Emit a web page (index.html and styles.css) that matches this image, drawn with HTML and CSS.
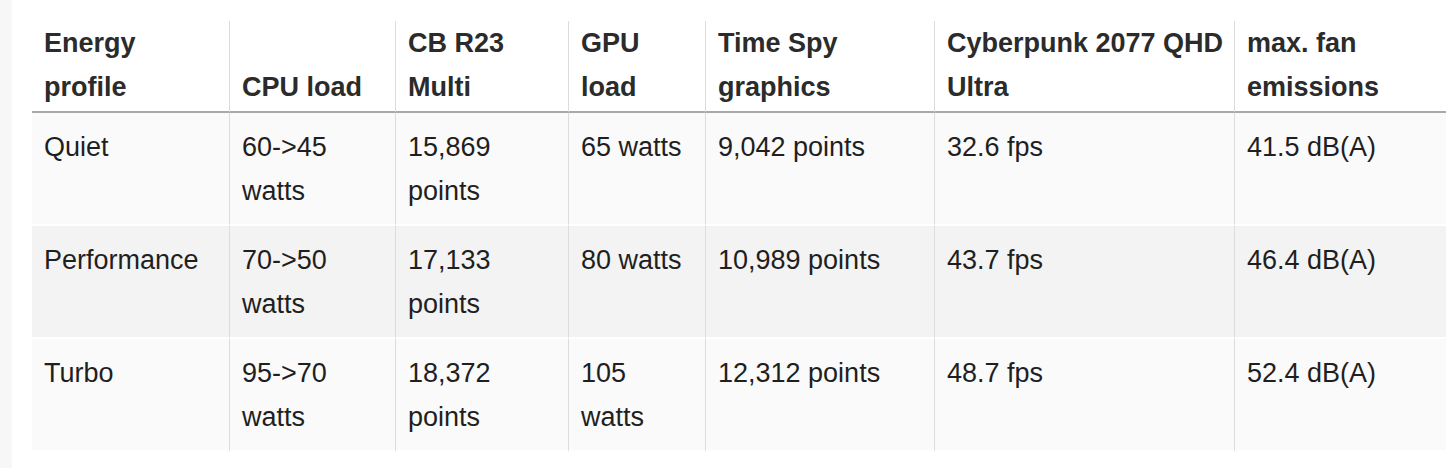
FILE: index.html
```html
<!DOCTYPE html>
<html lang="en">
<head>
<meta charset="utf-8">
<title>Energy profiles</title>
<link rel="stylesheet" href="styles.css">
</head>
<body>
<main class="page">
  <table class="bench">
    <colgroup>
      <col class="c1"><col class="c2"><col class="c3"><col class="c4"><col class="c5"><col class="c6"><col class="c7">
    </colgroup>
    <thead>
      <tr>
        <th>Energy profile</th>
        <th>CPU load</th>
        <th>CB R23 Multi</th>
        <th>GPU load</th>
        <th>Time Spy graphics</th>
        <th class="wide">Cyberpunk 2077 QHD Ultra</th>
        <th>max. fan emissions</th>
      </tr>
    </thead>
    <tbody>
      <tr>
        <td>Quiet</td>
        <td>60-&gt;45 watts</td>
        <td>15,869 points</td>
        <td>65 watts</td>
        <td>9,042 points</td>
        <td class="wide">32.6 fps</td>
        <td>41.5 dB(A)</td>
      </tr>
      <tr>
        <td>Performance</td>
        <td>70-&gt;50 watts</td>
        <td>17,133 points</td>
        <td>80 watts</td>
        <td>10,989 points</td>
        <td class="wide">43.7 fps</td>
        <td>46.4 dB(A)</td>
      </tr>
      <tr>
        <td>Turbo</td>
        <td>95-&gt;70 watts</td>
        <td>18,372 points</td>
        <td>105 watts</td>
        <td>12,312 points</td>
        <td class="wide">48.7 fps</td>
        <td>52.4 dB(A)</td>
      </tr>
    </tbody>
  </table>
</main>
</body>
</html>
```

FILE: styles.css
```css
html, body {
  margin: 0;
  padding: 0;
  height: 100%;
  overflow: hidden;
}

body {
  background: #f7f7f7;
  font-family: "Liberation Sans", Arial, Helvetica, sans-serif;
  font-size: 27px;
  line-height: 44px;
  color: #1f1f1f;
}

.page {
  margin-left: 12px;
  height: 100%;
  background: #ffffff;
  padding: 21px 0 0 20px;
  box-sizing: border-box;
  overflow: hidden;
}

.bench {
  border-collapse: separate;
  border-spacing: 0;
  table-layout: fixed;
  width: 1432px;
}

.c1 { width: 197px; }
.c2 { width: 166px; }
.c3 { width: 173px; }
.c4 { width: 137px; }
.c5 { width: 229px; }
.c6 { width: 300px; }
.c7 { width: 230px; }

.bench th,
.bench td {
  text-align: left;
  padding-left: 12px;
  padding-right: 12px;
  border-left: 1px solid #dcdcdc;
}

.bench th:first-child,
.bench td:first-child {
  border-left: none;
}

.bench th {
  font-weight: bold;
  color: #2b2b2b;
  vertical-align: bottom;
  padding-top: 0;
  padding-bottom: 2px;
  border-bottom: 2px solid #a9a9a9;
  background: #ffffff;
}

.bench td {
  vertical-align: top;
  padding-top: 12px;
  padding-bottom: 11px;
  border-bottom: 2px solid #ffffff;
}

.bench .wide {
  padding-right: 0;
}

.bench tbody tr:nth-child(odd) td {
  background: #fafafa;
}

.bench tbody tr:nth-child(even) td {
  background: #f3f3f3;
}
```
